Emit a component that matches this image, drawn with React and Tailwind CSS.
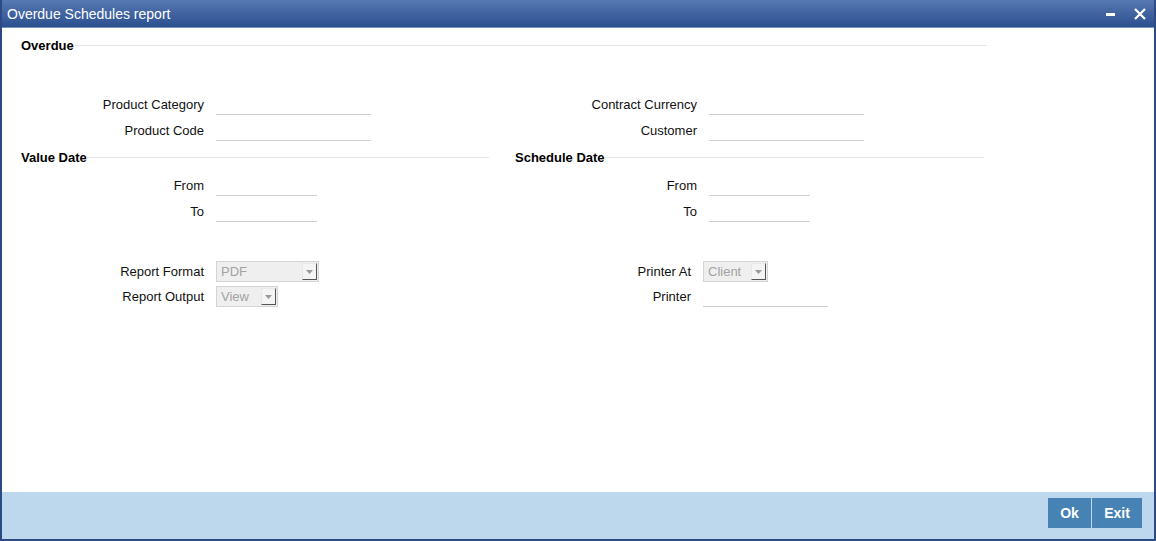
import React from "react";

const font = { fontFamily: '"Liberation Sans", Arial, sans-serif' };

function Heading({ title, lineClass = "" }) {
  return (
    <div className="flex items-center h-[16px]">
      <span className="text-[13px] font-bold text-black leading-none whitespace-nowrap">{title}</span>
      <div className={`flex-1 h-px bg-[#e6e6e6] ${lineClass}`}></div>
    </div>
  );
}

function Field({ label, width, labelWidth = "w-[202px]" }) {
  return (
    <div className="flex items-center h-[26px]">
      <div className={`${labelWidth} text-right text-[13px] text-[#111] leading-none`}>{label}</div>
      <div className={`ml-[12px] h-[20px] mt-[1px] border-b border-[#cfcfcf] ${width}`}></div>
    </div>
  );
}

function Select({ value, width, label, labelWidth = "w-[202px]" }) {
  return (
    <div className="flex items-center h-[25px]">
      <div className={`${labelWidth} text-right text-[13px] text-[#111] leading-none`}>{label}</div>
      <div className={`ml-[12px] h-[21px] ${width} flex items-center justify-between bg-[#efefef] border border-[#d4d4d4]`}>
        <span className="pl-[4px] text-[13px] text-[#a3a3a3] leading-none">{value}</span>
        <div className="w-[15px] h-[17px] mr-px bg-[#f4f4f4] border border-t-[#e8e8e8] border-l-[#e8e8e8] border-r-[#555] border-b-[#555] flex items-center justify-center">
          <svg width="7" height="4" viewBox="0 0 7 4">
            <path d="M0 0 L7 0 L3.5 4 Z" fill="#9a9a9a" />
          </svg>
        </div>
      </div>
    </div>
  );
}

export default function App() {
  return (
    <div className="w-[1156px] h-[541px] flex flex-col bg-white border-l-2 border-r-2 border-b-2 border-[#2c4a86]" style={font}>
      <div className="h-[28px] shrink-0 flex items-center justify-between bg-gradient-to-b from-[#5679b3] to-[#2c4f8f] border-b border-[#7593bb]">
        <span className="pl-[5px] text-[14px] text-white leading-none">Overdue Schedules report</span>
        <div className="flex items-center gap-[18px] pr-[8px]">
          <svg width="10" height="10" viewBox="0 0 10 10">
            <rect x="0" y="4" width="9" height="3" fill="white" />
          </svg>
          <svg width="12" height="12" viewBox="0 0 12 12">
            <path d="M1 1 L11 11 M11 1 L1 11" stroke="white" strokeWidth="2.2" />
          </svg>
        </div>
      </div>

      <div className="flex-1 w-[985px]">
        <div className="pl-[19px] mt-[9px]">
          <Heading title="Overdue" />
        </div>

        <div className="grid grid-cols-[491px_494px] mt-[38px]">
          <div>
            <Field label="Product Category" width="w-[155px]" />
            <Field label="Product Code" width="w-[155px]" />
          </div>
          <div>
            <Field label="Contract Currency" width="w-[155px]" labelWidth="w-[204px]" />
            <Field label="Customer" width="w-[155px]" labelWidth="w-[204px]" />
          </div>
        </div>

        <div className="grid grid-cols-[491px_494px] mt-[6px]">
          <div>
            <div className="pl-[19px] pr-[4px]">
              <Heading title="Value Date" />
            </div>
            <div className="mt-[7px]">
              <Field label="From" width="w-[101px]" />
              <Field label="To" width="w-[101px]" />
            </div>
          </div>
          <div>
            <div className="pl-[22px] pr-[3px]">
              <Heading title="Schedule Date" />
            </div>
            <div className="mt-[7px]">
              <Field label="From" width="w-[101px]" labelWidth="w-[204px]" />
              <Field label="To" width="w-[101px]" labelWidth="w-[204px]" />
            </div>
          </div>
        </div>

        <div className="grid grid-cols-[491px_494px] mt-[35px]">
          <div>
            <Select label="Report Format" value="PDF" width="w-[103px]" />
            <Select label="Report Output" value="View" width="w-[62px]" />
          </div>
          <div>
            <Select label="Printer At" value="Client" width="w-[65px]" labelWidth="w-[198px]" />
            <div className="flex items-center h-[25px]">
              <div className="w-[198px] text-right text-[13px] text-[#111] leading-none">Printer</div>
              <div className="ml-[12px] h-[21px] w-[125px] border-b border-[#cfcfcf]"></div>
            </div>
          </div>
        </div>
      </div>

      <div className="h-[47px] shrink-0 bg-[#bdd8ec] flex items-start justify-end pr-[12px] pt-[6px]">
        <div className="flex gap-px">
          <button className="w-[43px] h-[30px] bg-[#4682b4] text-white text-[14px] font-bold">Ok</button>
          <button className="w-[50px] h-[30px] bg-[#4682b4] text-white text-[14px] font-bold">Exit</button>
        </div>
      </div>
    </div>
  );
}
